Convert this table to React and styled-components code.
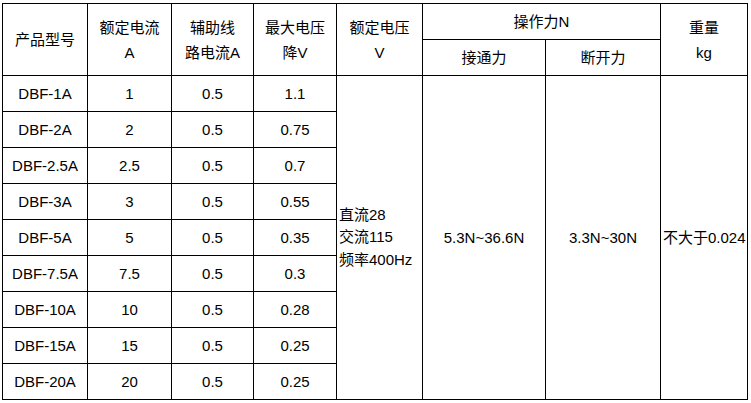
import React from "react";
import styled, { createGlobalStyle } from "styled-components";

const GlobalStyle = createGlobalStyle`
  html, body {
    margin: 0;
    padding: 0;
    background: #fff;
  }
  body {
    font-family: "Liberation Sans", "Noto Sans CJK SC", sans-serif;
    color: #000;
  }
`;

const widths = [85, 84, 82, 83, 86, 123, 115, 87];

const rows = [
  ["DBF-1A", "1", "0.5", "1.1"],
  ["DBF-2A", "2", "0.5", "0.75"],
  ["DBF-2.5A", "2.5", "0.5", "0.7"],
  ["DBF-3A", "3", "0.5", "0.55"],
  ["DBF-5A", "5", "0.5", "0.35"],
  ["DBF-7.5A", "7.5", "0.5", "0.3"],
  ["DBF-10A", "10", "0.5", "0.28"],
  ["DBF-15A", "15", "0.5", "0.25"],
  ["DBF-20A", "20", "0.5", "0.25"],
];

const Page = styled.div`
  padding: 3px 0 0 2px;
`;

const Table = styled.table`
  border-collapse: collapse;
  table-layout: fixed;
  width: 746px;
  font-size: 15px;
`;

const Col = styled.col`
  width: ${(p) => p.$w}px;
`;

const Cell = styled.td`
  border: 1px solid #000;
  height: 35px;
  padding: 0;
  text-align: ${(p) => (p.$left ? "left" : "center")};
  padding-left: ${(p) => (p.$left ? "2px" : "0")};
  vertical-align: middle;
  line-height: ${(p) => p.$lh || 18}px;
  white-space: nowrap;
  overflow: hidden;
`;

const Head = styled(Cell).attrs({ as: "th" })`
  font-weight: normal;
  line-height: 25px;
`;

export default function App() {
  return (
    <Page>
      <GlobalStyle />
      <Table>
        <colgroup>
          {widths.map((w, i) => (
            <Col key={i} $w={w} />
          ))}
        </colgroup>
        <thead>
          <tr>
            <Head rowSpan={2}>产品型号</Head>
            <Head rowSpan={2}>
              额定电流
              <br />A
            </Head>
            <Head rowSpan={2}>
              辅助线
              <br />
              路电流A
            </Head>
            <Head rowSpan={2}>
              最大电压
              <br />
              降V
            </Head>
            <Head rowSpan={2}>
              额定电压
              <br />V
            </Head>
            <Head colSpan={2}>操作力N</Head>
            <Head rowSpan={2}>
              重量
              <br />
              kg
            </Head>
          </tr>
          <tr>
            <Head>接通力</Head>
            <Head>断开力</Head>
          </tr>
        </thead>
        <tbody>
          {rows.map((r, i) => (
            <tr key={r[0]}>
              {r.map((v, j) => (
                <Cell key={j}>{v}</Cell>
              ))}
              {i === 0 && (
                <>
                  <Cell rowSpan={9} $left $lh={22.5}>
                    直流28
                    <br />
                    交流115
                    <br />
                    频率400Hz
                  </Cell>
                  <Cell rowSpan={9}>5.3N~36.6N</Cell>
                  <Cell rowSpan={9}>3.3N~30N</Cell>
                  <Cell rowSpan={9} $left>
                    不大于0.024
                  </Cell>
                </>
              )}
            </tr>
          ))}
        </tbody>
      </Table>
    </Page>
  );
}
